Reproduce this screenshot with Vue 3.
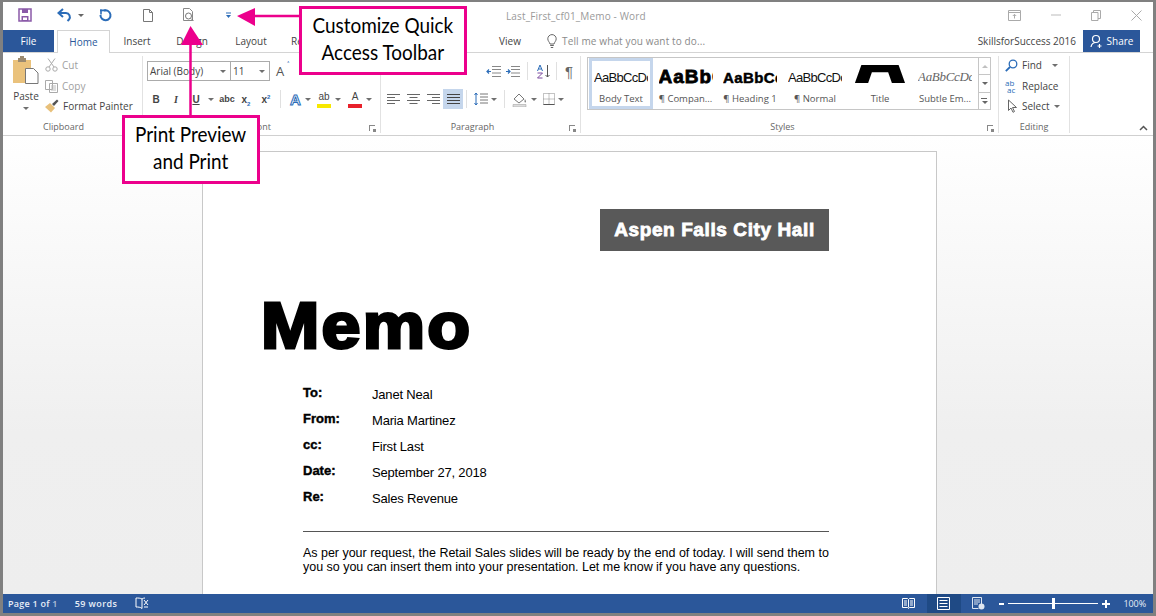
<script setup>
const tabs = [
  { t: 'Insert', w: 54 }, { t: 'Design', w: 56 }, { t: 'Layout', w: 62 }, { t: 'References', w: 70 },
  { t: 'Mailings', w: 60 }, { t: 'Review', w: 58 }, { t: 'View', w: 80 }
]
const styles = [
  { label: 'Body Text', cls: 'pv-body', w: 64, text: 'AaBbCcDc', sel: true },
  { label: '¶ Compan...', cls: 'pv-comp', w: 65, text: 'AaBbCcDc' },
  { label: '¶ Heading 1', cls: 'pv-head', w: 64, text: 'AaBbCcDc' },
  { label: '¶ Normal', cls: 'pv-norm', w: 66, text: 'AaBbCcDc' },
  { label: 'Title', cls: 'pv-title', w: 64, text: 'A' },
  { label: 'Subtle Em...', cls: 'pv-sub', w: 66, text: 'AaBbCcDc' }
]
const fields = [
  ['To:', 'Janet Neal'], ['From:', 'Maria Martinez'], ['cc:', 'First Last'],
  ['Date:', 'September 27, 2018'], ['Re:', 'Sales Revenue']
]
</script>

<template>
  <div class="frame">
    <div class="window">
      <header class="titlebar">
        <div class="qat">
          <svg class="q-save" width="14" height="14" viewBox="0 0 14 14"><path d="M1 1h12v12H1z" fill="none" stroke="#8a5aa8" stroke-width="1.500"/><path d="M4 1h6v4H4z" fill="#8a5aa8"/><path d="M3.500 8h7v5h-7z" fill="#8a5aa8"/><path d="M5 9.500h4v2.500H5z" fill="#fff"/></svg>
          <svg class="q-undo" width="15" height="14" viewBox="0 0 15 14"><path d="M2 5h7a4 4 0 0 1 3 6.500L10.500 13" fill="none" stroke="#2b6cb8" stroke-width="2"/><path d="M6 1 1.500 5 6 9" fill="none" stroke="#2b6cb8" stroke-width="2"/></svg>
          <i class="caret q-caret"></i>
          <svg class="q-redo" width="13" height="14" viewBox="0 0 13 14"><path d="M5 2.500A5 5 0 1 1 1.500 7" fill="none" stroke="#2b6cb8" stroke-width="2"/><path d="M1 1.500h6v1.800H1z" fill="#2b6cb8"/><path d="M1.200 1.500v5h1.600v-5z" fill="#2b6cb8"/></svg>
          <svg class="q-new" width="12" height="13" viewBox="0 0 12 13"><path d="M1.500.5h6l3 3v9h-9z" fill="#fff" stroke="#777"/><path d="M7.500.5v3h3" fill="none" stroke="#777"/></svg>
          <svg class="q-print" width="13" height="14" viewBox="0 0 13 14"><path d="M1.500.5h6l3 3v9h-9z" fill="#fff" stroke="#888"/><circle cx="6.500" cy="8" r="3" fill="#fff" stroke="#777"/><path d="m9 10.500 2.500 2.500" stroke="#777"/></svg>
          <svg class="q-more" width="7" height="7" viewBox="0 0 7 7"><path d="M1 1h5" stroke="#2b6cb8"/><path d="M1 3h5L3.500 6z" fill="#2b6cb8"/></svg>
        </div>
        <div class="doc-title">Last_First_cf01_Memo - Word</div>
        <div class="winbtns">
          <svg width="13" height="11" viewBox="0 0 13 11"><path d="M.5.500h12v10H.5zM.5 2.500h12" fill="none" stroke="#aaa"/><path d="M6.500 8.500v-4M4.800 6l1.700-1.700L8.200 6" fill="none" stroke="#aaa"/></svg>
          <svg width="10" height="2" viewBox="0 0 10 2"><path d="M0 1h10" stroke="#bbb"/></svg>
          <svg width="10" height="11" viewBox="0 0 10 11"><path d="M.5 2.500h6.500v8H.5zM2.500 2.500v-2h7v8H7" fill="none" stroke="#aaa"/></svg>
          <svg width="11" height="11" viewBox="0 0 11 11"><path d="m.5.500 10 10M10.500.5l-10 10" stroke="#aaa"/></svg>
        </div>
      </header>

      <nav class="tabbar">
        <div class="tab-file">File</div>
        <div class="tab-home">Home</div>
        <div v-for="t in tabs" :key="t.t" class="tab" :style="{ width: t.w + 'px' }">{{ t.t }}</div>
        <div class="tell">
          <svg width="10" height="15" viewBox="0 0 10 15"><path d="M3 10C2.500 8 .8 7 .8 4.800a4.200 4.200 0 0 1 8.400 0C9.200 7 7.500 8 7 10z" fill="none" stroke="#666"/><path d="M3.200 11.500h3.600M3.800 13.500h2.400" stroke="#666"/></svg>
          <span>Tell me what you want to do...</span>
        </div>
        <div class="acct">SkillsforSuccess 2016</div>
        <div class="share">
          <svg width="14" height="15" viewBox="0 0 14 15"><circle cx="6" cy="5" r="3.500" fill="none" stroke="#fff" stroke-width="1.200"/><path d="M1 13c.5-3 2.500-4.500 5-4.500M9.500 10v4M7.500 12h4" fill="none" stroke="#fff" stroke-width="1.200"/></svg>
          <span>Share</span>
        </div>
      </nav>

      <section class="ribbon">
        <div class="group g-clip">
          <div class="g-body clip-body">
            <div class="paste">
              <svg width="28" height="30" viewBox="0 0 28 30"><path d="M1 4h18v23H1z" fill="#eac27c"/><path d="M6 2h8v4H6z" fill="#9b8a70"/><path d="M8 0h4v3H8z" fill="#9b8a70"/><path d="M13.500 12.500h8l4.500 4.500v10.500H13.500z" fill="#fff" stroke="#777"/></svg>
              <span>Paste</span>
              <i class="caret caret-gray"></i>
            </div>
            <div class="clip-list">
              <div class="clip-item off">
                <svg width="13" height="14" viewBox="0 0 13 14"><circle cx="3" cy="11" r="2.200" fill="none" stroke="#aaa"/><circle cx="10" cy="11" r="2.200" fill="none" stroke="#aaa"/><path d="M4 9 10 .5M9 9 3 .5" stroke="#aaa"/></svg>
                <span>Cut</span>
              </div>
              <div class="clip-item off">
                <svg width="13" height="14" viewBox="0 0 13 14"><path d="M.5 1.500h7v9h-7zM4.500 4.500h8v9h-8z" fill="#fff" stroke="#aaa"/><path d="M6 7h5M6 9h5M6 11h5" stroke="#bbb"/></svg>
                <span>Copy</span>
              </div>
              <div class="clip-item">
                <svg width="14" height="14" viewBox="0 0 14 14"><path d="m0 8 5-4 5 5-4 4.500z" fill="#e8c07a"/><path d="m7 5 5-4.500 1.500 1.500L9 7z" fill="#555"/></svg>
                <span>Format Painter</span>
              </div>
            </div>
          </div>
          <div class="g-label">Clipboard</div>
        </div>

        <div class="group g-font">
          <div class="g-body font-body">
            <div class="font-row one">
              <div class="combo c-name"><span>Arial (Body)</span><i class="caret caret-gray"></i></div>
              <div class="combo c-size"><span>11</span><i class="caret caret-gray"></i></div>
              <span class="grow-a">A<b>˄</b></span>
            </div>
            <div class="font-row two">
              <span class="fb fw">B</span>
              <span class="fb fi">I</span>
              <span class="fb fu">U</span>
              <i class="caret caret-gray c-u"></i>
              <span class="fb fabc">abc</span>
              <span class="fb fx fx1">x<sub>2</sub></span>
              <span class="fb fx">x<sup>2</sup></span>
              <span class="vsep"></span>
              <span class="fb fefx">A</span>
              <i class="caret caret-gray"></i>
              <span class="hl"><em>ab</em></span>
              <i class="caret caret-gray"></i>
              <span class="fc"><em>A</em></span>
              <i class="caret caret-gray"></i>
            </div>
          </div>
          <div class="g-label">Font</div>
          <i class="launcher"></i>
        </div>

        <div class="group g-para">
          <div class="g-body para-body">
            <div class="para-row one">
              <svg class="in1" width="15" height="11" viewBox="0 0 15 11"><path d="M6 .5h9M6 3.500h9M6 7h9M6 10.500h9" stroke="#888"/><path d="M5 5.500H1M3 3.500l-2 2 2 2" fill="none" stroke="#2b6cb8" stroke-width="1.200"/></svg>
              <svg class="in2" width="15" height="11" viewBox="0 0 15 11"><path d="M6 .5h9M6 3.500h9M6 7h9M6 10.500h9" stroke="#888"/><path d="M1 5.500h4M3 3.500l2 2-2 2" fill="none" stroke="#2b6cb8" stroke-width="1.200"/></svg>
              <span class="vsep"></span>
              <svg class="sort" width="15" height="15" viewBox="0 0 15 15"><path d="M11.500 1v12M9.500 11l2 2 2-2" fill="none" stroke="#555"/><path d="M1.500 7 4 1l2.500 6M2.500 5h3" fill="none" stroke="#2b6cb8"/><path d="M1.500 9h5l-5 5h5" fill="none" stroke="#7b4a9e"/></svg>
              <span class="vsep"></span>
              <span class="pilcrow">¶</span>
            </div>
            <div class="para-row two">
              <svg class="al" width="13" height="10" viewBox="0 0 13 10"><path d="M0 .5h13M0 3.500h8M0 6.500h13M0 9.500h8" stroke="#666"/></svg>
              <svg class="al" width="13" height="10" viewBox="0 0 13 10"><path d="M0 .5h13M2.500 3.500h8M0 6.500h13M2.500 9.500h8" stroke="#666"/></svg>
              <svg class="al" width="13" height="10" viewBox="0 0 13 10"><path d="M0 .5h13M5 3.500h8M0 6.500h13M5 9.500h8" stroke="#666"/></svg>
              <div class="al-on"><svg width="13" height="10" viewBox="0 0 13 10"><path d="M0 .5h13M0 3.500h13M0 6.500h13M0 9.500h13" stroke="#444"/></svg></div>
              <span class="vsep"></span>
              <svg width="14" height="14" viewBox="0 0 14 14"><path d="M6 2h8M6 5h8M6 8h8M6 11h8" stroke="#777"/><path d="M2 1v12M.5 3 2 1l1.500 2M.5 11 2 13l1.500-2" fill="none" stroke="#2b6cb8"/></svg>
              <i class="caret caret-gray"></i>
              <span class="vsep v2"></span>
              <svg width="16" height="15" viewBox="0 0 16 15"><path d="m2 7 5-5 5 5-5 4z" fill="#fff" stroke="#777"/><path d="M13 7c1 2 1.500 3 .5 3.500S12 9 13 7z" fill="#888"/><path d="M1 12.500h13V15H1z" fill="#ddd" stroke="#999" stroke-width=".5"/></svg>
              <i class="caret caret-gray"></i>
              <svg width="12" height="12" viewBox="0 0 12 12"><path d="M.5.500h11v11H.5zM6 .5v11M.5 6h11" fill="none" stroke="#888" stroke-dasharray="1 1"/><path d="M.5 11.500h11" stroke="#555"/></svg>
              <i class="caret caret-gray"></i>
            </div>
          </div>
          <div class="g-label">Paragraph</div>
          <i class="launcher"></i>
        </div>

        <div class="group g-styles">
          <div class="g-body styles-body">
            <div class="gallery">
              <div class="cells">
                <div v-for="s in styles" :key="s.label" class="cell" :class="{ sel: s.sel }" :style="{ width: s.w + 'px' }">
                  <div class="preview" :class="s.cls"><span>{{ s.text }}</span></div>
                  <div class="cell-label">{{ s.label }}</div>
                </div>
              </div>
              <div class="scroller">
                <div class="sb"><i class="up"></i></div>
                <div class="sb"><i class="down"></i></div>
                <div class="sb more"><i class="down"></i></div>
              </div>
            </div>
          </div>
          <div class="g-label">Styles</div>
          <i class="launcher"></i>
        </div>

        <div class="group g-edit">
          <div class="g-body edit-body">
            <div class="edit-item">
              <svg width="13" height="13" viewBox="0 0 13 13"><circle cx="8" cy="5" r="3.800" fill="none" stroke="#2b6cb8" stroke-width="1.300"/><path d="M5 8 .8 12.200" stroke="#2b6cb8" stroke-width="1.800"/></svg>
              <span>Find</span><i class="caret caret-gray ml"></i>
            </div>
            <div class="edit-item">
              <span class="rep"><b>ab</b><b class="rb">ac</b></span>
              <span>Replace</span>
            </div>
            <div class="edit-item">
              <svg width="13" height="14" viewBox="0 0 13 14"><path d="m3.500 1 8 7.500H7.500l2 4-1.500.8-2-4.300-2.500 2.500z" fill="#fff" stroke="#666"/></svg>
              <span>Select</span><i class="caret caret-gray"></i>
            </div>
          </div>
          <div class="g-label">Editing</div>
        </div>
        <svg class="collapse" width="9" height="6" viewBox="0 0 9 6"><path d="M1 5 4.500 1.500 8 5" fill="none" stroke="#555" stroke-width="1.500"/></svg>
      </section>

      <main class="docarea">
        <article class="page">
          <div class="banner-row"><div class="banner">Aspen Falls City Hall</div></div>
          <h1 class="memo">Memo</h1>
          <div class="fields">
            <div v-for="f in fields" :key="f[0]" class="field">
              <span class="f-k">{{ f[0] }}</span>
              <span class="f-v">{{ f[1] }}</span>
            </div>
          </div>
          <hr class="rule" />
          <p class="body-p">As per your request, the Retail Sales slides will be ready by the end of today. I will send them to<br />you so you can insert them into your presentation. Let me know if you have any questions.</p>
        </article>
      </main>

      <footer class="status">
        <span class="st-page">Page 1 of <em>1</em></span>
        <span class="st-words">59 words</span>
        <svg class="st-book" width="14" height="13" viewBox="0 0 14 13"><path d="M7 2C5.500 1 3 1 1 1v9c2 0 4.500 0 6 1.500V2zM7 2c1 -.7 2-1 3-1" fill="none" stroke="#fff"/><path d="m9 3 4 5M13 3 9 8" stroke="#fff"/><path d="M13 10H9" stroke="#fff"/></svg>
        <div class="st-right">
          <svg class="v-read" width="13" height="13" viewBox="0 0 13 13"><path d="M.5 1.500h5l1 1 1-1h5v9h-5l-1 1-1-1h-5zM6.500 2.500v8" fill="#2b579a" stroke="#fff"/><path d="M2 4h3M2 6h3M2 8h3M8 4h3M8 6h3M8 8h3" stroke="#fff"/></svg>
          <div class="v-print"><svg width="13" height="13" viewBox="0 0 13 13"><path d="M.5.500h12v12H.5z" fill="none" stroke="#fff"/><path d="M2.500 3.500h8M2.500 6.500h8M2.500 9.500h8" stroke="#fff"/></svg></div>
          <svg class="v-web" width="13" height="13" viewBox="0 0 13 13"><path d="M.5.500h9v8M.5.500v11h6" fill="none" stroke="#dfe6f0"/><path d="M2 3h6M2 5h6M2 7h4" stroke="#dfe6f0"/><circle cx="9.500" cy="9.500" r="3" fill="#dfe6f0"/></svg>
          <span class="z-minus"></span>
          <div class="z-track"><span class="z-thumb"></span></div>
          <span class="z-plus"></span>
          <span class="z-pct">100%</span>
        </div>
      </footer>

      <svg class="arrows" width="1156" height="616" viewBox="0 0 1156 616">
        <path d="M300 16H250" stroke="#ec008c" stroke-width="2.500"/>
        <path d="M237 16 255 8V26Z" fill="#ec008c"/>
        <path d="M190.500 116V40" stroke="#ec008c" stroke-width="2.500"/>
        <path d="M190.500 26 181 45H203Z" fill="#ec008c"/>
      </svg>
      <div class="callout co-a"><span>Customize Quick<br />Access Toolbar</span></div>
      <div class="callout co-b"><span>Print Preview<br />and Print</span></div>
    </div>
  </div>
</template>

<style>
html, body { margin: 0; overflow: hidden; }
</style>

<style scoped>
.frame { width: 1156px; height: 616px; box-sizing: border-box; background: #808080; padding: 2px 3px 3px 3px; font-family: "Open Sans", "Noto Sans", sans-serif; }
.window { position: relative; height: 100%; display: flex; flex-direction: column; background: #fff; overflow: hidden; }
.titlebar { height: 28px; box-sizing: border-box; padding-bottom: 2px; display: flex; align-items: center; position: relative; flex: none; }
.qat { display: flex; align-items: center; padding-left: 15px; }
.q-save { margin-right: 25px; }
.q-undo { margin-right: 6px; }
.q-caret { margin-right: 15px; }
.q-redo { margin-right: 30px; }
.q-new { margin-right: 28px; }
.q-print { margin-right: 30px; }
.doc-title { position: absolute; left: 503px; top: 7px; font-size: 10px; color: #9a9a9a; letter-spacing: .15px; white-space: nowrap; }
.winbtns { margin-left: auto; display: flex; align-items: center; gap: 30px; padding-right: 11px; }
.caret { display: inline-block; width: 0; height: 0; border-left: 3px solid transparent; border-right: 3px solid transparent; border-top: 3px solid #666; flex: none; }
.caret-gray { border-top-color: #6f6f6f; }
.tabbar { height: 22px; display: flex; align-items: stretch; font-size: 10px; flex: none; border-bottom: 1px solid #d4d4d4; color: #444; }
.tab-file { width: 51px; background: #2b579a; color: #fff; display: flex; align-items: center; justify-content: center; margin-right: 3px; }
.tab-home { width: 53px; box-sizing: border-box; border: 1px solid #d4d4d4; border-bottom: 0; margin-bottom: -1px; background: #fff; color: #2b579a; display: flex; align-items: center; justify-content: center; }
.tab { display: flex; align-items: center; justify-content: center; flex: none; }
.tell { display: flex; align-items: center; gap: 5px; color: #8a8a8a; margin-left: -3px; letter-spacing: .13px; }
.acct { margin-left: auto; display: flex; align-items: center; margin-right: 7px; color: #444; }
.share { width: 57px; background: #2b579a; color: #fff; display: flex; align-items: center; justify-content: center; gap: 3px; margin-right: 13px; }
.ribbon { height: 82px; flex: none; display: flex; position: relative; border-bottom: 1px solid #d0d0d0; }
.group { position: relative; display: flex; flex-direction: column; box-sizing: border-box; border-right: 1px solid #e2e2e2; margin: 3px 0 2px; flex: none; }
.g-body { flex: 1; min-height: 0; }
.g-label { height: 12px; line-height: 12px; text-align: center; font-size: 9px; color: #666; flex: none; }
.launcher { position: absolute; right: 5px; bottom: 2px; width: 6px; height: 6px; border-left: 1px solid #888; border-top: 1px solid #888; box-sizing: border-box; }
.launcher::after { content: ""; position: absolute; right: -1px; bottom: -1px; width: 3px; height: 3px; background: #888; }
.g-clip { width: 140px; }
.g-clip .g-label { padding-right: 18px; }
.clip-body { display: flex; padding-left: 8px; }
.paste { width: 30px; display: flex; flex-direction: column; align-items: center; font-size: 10px; color: #444; }
.paste span { margin-top: 3px; line-height: 14px; }
.paste .caret { margin-top: 4px; }
.clip-list { display: flex; flex-direction: column; margin-left: 4px; margin-top: -1px; }
.clip-item { height: 20.500px; display: flex; align-items: center; gap: 4px; font-size: 10px; color: #444; white-space: nowrap; flex: none; }
.clip-item.off { color: #a0a0a0; }
.g-font { width: 238px; }
.font-body { padding-left: 4px; }
.font-row { display: flex; align-items: center; }
.font-row.one { height: 22px; margin-top: 4px; }
.combo { height: 20px; box-sizing: border-box; border: 1px solid #ababab; display: flex; align-items: center; justify-content: space-between; font-size: 10px; color: #444; padding: 0 4px 0 2px; }
.c-name { width: 84px; }
.c-size { width: 39px; margin-left: 0; border-left: 0; }
.grow-a { font-size: 13px; color: #555; margin-left: 6px; position: relative; }
.grow-a b { position: absolute; font-size: 7px; top: -2px; right: -5px; color: #2b6cb8; }
.font-row.two { height: 20px; margin-top: 7px; padding-left: 5px; }
.fb { font-family: "Liberation Sans", sans-serif; font-size: 10px; color: #444; text-align: center; }
.fw { font-weight: 700; width: 8px; margin-right: 13px; }
.fi { font-style: italic; font-weight: 700; font-family: "Liberation Serif", serif; width: 6px; margin-right: 13px; }
.fu { font-weight: 700; text-decoration: underline; width: 8px; margin-right: 8px; }
.c-u { margin-right: 4px; }
.fabc { font-size: 9px; font-weight: 700; width: 18px; margin-right: 2px; }
.fx { font-weight: 700; width: 16px; margin-right: 2px; }
.fx1 { margin-right: 4px; }
.fx sub, .fx sup { font-size: 6px; color: #2b6cb8; line-height: 0; }
.vsep { width: 1px; height: 18px; background: #e0e0e0; flex: none; }
.font-row.two .vsep { margin: 0 8px 0 4px; }
.fefx { font-size: 15px; font-weight: 700; color: #fff; -webkit-text-stroke: 1px #2b6cb8; width: 13px; margin-right: 3px; }
.hl { margin-left: 6px; margin-right: 4px; width: 14px; display: flex; flex-direction: column; align-items: center; height: 17px; border-bottom: 4px solid #f7e800; box-sizing: border-box; }
.hl em, .fc em { font-family: "Liberation Sans", sans-serif; font-style: normal; color: #444; font-size: 10px; line-height: 12px; }
.fc { margin-left: 7px; margin-right: 4px; width: 14px; display: flex; flex-direction: column; align-items: center; height: 17px; border-bottom: 4px solid #e8212b; box-sizing: border-box; }
.g-para { width: 200px; }
.g-para .g-label { padding-right: 16px; }
.para-row { display: flex; align-items: center; }
.para-row.one { height: 20px; padding: 5px 0 0 105px; }
.in1 { margin-right: 4px; }
.in2 { margin-right: 7px; }
.para-row.one .vsep { margin-right: 8px; }
.sort { margin-right: 5px; }
.pilcrow { font-family: "Liberation Sans", sans-serif; font-size: 15px; color: #666; }
.para-row.two { height: 20px; margin-top: 8px; padding-left: 6px; }
.para-row.two .al { margin-right: 7px; }
.al-on { width: 20px; height: 20px; background: #c5d6ec; display: flex; align-items: center; justify-content: center; margin-left: -4px; flex: none; }
.para-row.two .vsep { margin-right: 7px; margin-left: 3px; }
.para-row.two .caret { margin: 0 6px 0 3px; }
.para-row.two .v2 { margin-left: 1px; margin-right: 7px; }
.g-styles { width: 418px; }
.g-styles .g-label { padding-right: 14px; }
.styles-body { padding-left: 6px; }
.gallery { width: 404px; height: 53px; box-sizing: border-box; border: 1px solid #c6c6c6; display: flex; margin-top: 1px; }
.cells { flex: 1; display: flex; overflow: hidden; padding-left: 1px; }
.cell { flex: none; box-sizing: border-box; height: 51px; padding-top: 4px; display: flex; flex-direction: column; align-items: center; overflow: hidden; }
.cell.sel { border: 3px solid #c5d6ec; padding-top: 1px; }
.preview { height: 30px; width: 54px; flex: none; overflow: hidden; display: flex; align-items: center; justify-content: flex-start; white-space: nowrap; color: #111; font-family: "Liberation Sans", sans-serif; font-size: 13px; }
.cell-label { font-size: 9.500px; line-height: 14px; color: #555; white-space: nowrap; }
.pv-body, .pv-norm { letter-spacing: -.7px; }
.pv-comp { font-size: 19px; font-weight: 700; -webkit-text-stroke: .8px #000; color: #000; letter-spacing: 1px; }
.pv-head { font-size: 15px; font-weight: 700; -webkit-text-stroke: .5px #000; color: #000; letter-spacing: .4px; }
.pv-title { position: relative; height: 18px; margin: 3px 0 9px; width: 52px; }
.pv-title span { position: absolute; left: 50%; bottom: -10.700px; transform: translateX(-50%); font-size: 70px; line-height: 70px; font-weight: 700; color: #000; -webkit-text-stroke: 3px #000; }
.pv-sub { font-family: "Liberation Serif", serif; font-style: italic; color: #666; font-size: 13px; letter-spacing: -.3px; }
.scroller { width: 11px; display: flex; flex-direction: column; border-left: 1px solid #c6c6c6; flex: none; }
.sb { flex: 1; display: flex; align-items: center; justify-content: center; border-bottom: 1px solid #c6c6c6; position: relative; }
.sb:last-child { border-bottom: 0; }
.sb i { width: 0; height: 0; border-left: 3px solid transparent; border-right: 3px solid transparent; }
.sb .up { border-bottom: 3px solid #c0c0c0; }
.sb .down { border-top: 3px solid #666; }
.more::before { content: ""; position: absolute; top: 5px; left: 2px; width: 6px; height: 1px; background: #666; }
.more i { margin-top: 4px; }
.g-edit { width: 71px; }
.edit-body { padding: 0 0 0 6px; margin-top: -1px; }
.edit-item { height: 20.500px; display: flex; align-items: center; gap: 4px; font-size: 10px; color: #444; white-space: nowrap; }
.ml { margin-left: 6px; }
.edit-item i { margin-top: 1px; }
.rep { display: flex; flex-direction: column; font-size: 8px; line-height: 7px; color: #2b6cb8; font-weight: 400; width: 13px; }
.rep b { font-weight: 400; }
.rb { margin-left: 2px; }
.collapse { position: absolute; right: 5px; bottom: 4px; }
.docarea { flex: 1; min-height: 0; overflow: hidden; background: linear-gradient(#ffffff, #fafafa 20%, #efefef 65%, #eeeeee); padding: 15px 0 0 199px; }
.page { width: 735px; height: 600px; box-sizing: border-box; background: #fff; border: 1px solid #c8c8c8; padding: 57px 107px 0 100px; color: #000; font-family: "Liberation Sans", Arial, sans-serif; }
.banner-row { display: flex; justify-content: flex-end; }
.banner { width: 229px; height: 42px; background: #595959; color: #fff; display: flex; align-items: center; justify-content: center; font-size: 19px; font-weight: 700; -webkit-text-stroke: .8px #fff; letter-spacing: .6px; white-space: nowrap; }
.memo { margin: 38px 0 0 -42px; font-size: 64px; line-height: 74px; font-weight: 700; letter-spacing: 2px; -webkit-text-stroke: 3px #000; transform: scaleX(1.095); transform-origin: left center; }
.fields { margin-top: 18px; display: flex; flex-direction: column; }
.field { height: 26px; display: flex; align-items: center; }
.f-k { width: 69px; font-size: 13px; font-weight: 700; -webkit-text-stroke: .4px #000; margin-top: -3px; }
.f-v { font-size: 13px; letter-spacing: -.18px; }
.rule { margin: 20px 0 0; border: 0; border-top: 1px solid #555; }
.body-p { margin: 14px 0 0; font-size: 12.500px; line-height: 14px; white-space: nowrap; letter-spacing: -.02px; }
.status { height: 19px; flex: none; background: #2b579a; color: #e8eef7; display: flex; align-items: center; font-size: 9px; font-weight: 600; letter-spacing: .25px; padding-left: 5px; }
.st-page em { font-style: normal; opacity: .7; }
.st-words { margin-left: 17px; letter-spacing: .4px; }
.st-book { margin-left: 18px; }
.st-right { margin-left: auto; display: flex; align-items: center; height: 100%; }
.v-read { margin-right: 12px; }
.v-print { width: 34px; height: 100%; background: #1f4a85; display: flex; align-items: center; justify-content: center; }
.v-web { margin: 0 14px 0 11px; }
.z-minus { width: 5px; height: 2px; background: #fff; margin-right: 4px; }
.z-track { width: 90px; height: 1px; background: #fff; position: relative; }
.z-thumb { position: absolute; left: 44px; top: -5px; width: 3px; height: 11px; background: #fff; }
.z-plus { width: 8px; height: 2px; background: #fff; margin-left: 4px; position: relative; }
.z-plus::after { content: ""; position: absolute; left: 3px; top: -3px; width: 2px; height: 8px; background: #fff; }
.z-pct { margin: 0 7px 0 14px; font-weight: 400; letter-spacing: -.1px; }
.arrows { position: absolute; left: -3px; top: -2px; pointer-events: none; }
.callout { position: absolute; box-sizing: border-box; background: #fff; border: 3px solid #ec008c; color: #000; font-family: Lato, "Noto Sans", sans-serif; font-size: 22px; line-height: 27px; text-align: center; display: flex; align-items: center; justify-content: center; white-space: nowrap; padding-bottom: 6px; }
.callout span { display: block; transform: scaleX(.86); }
.co-a { left: 296px; top: 4px; width: 168px; height: 69px; }
.co-b { left: 119px; top: 113px; width: 138px; height: 69px; }
</style>
